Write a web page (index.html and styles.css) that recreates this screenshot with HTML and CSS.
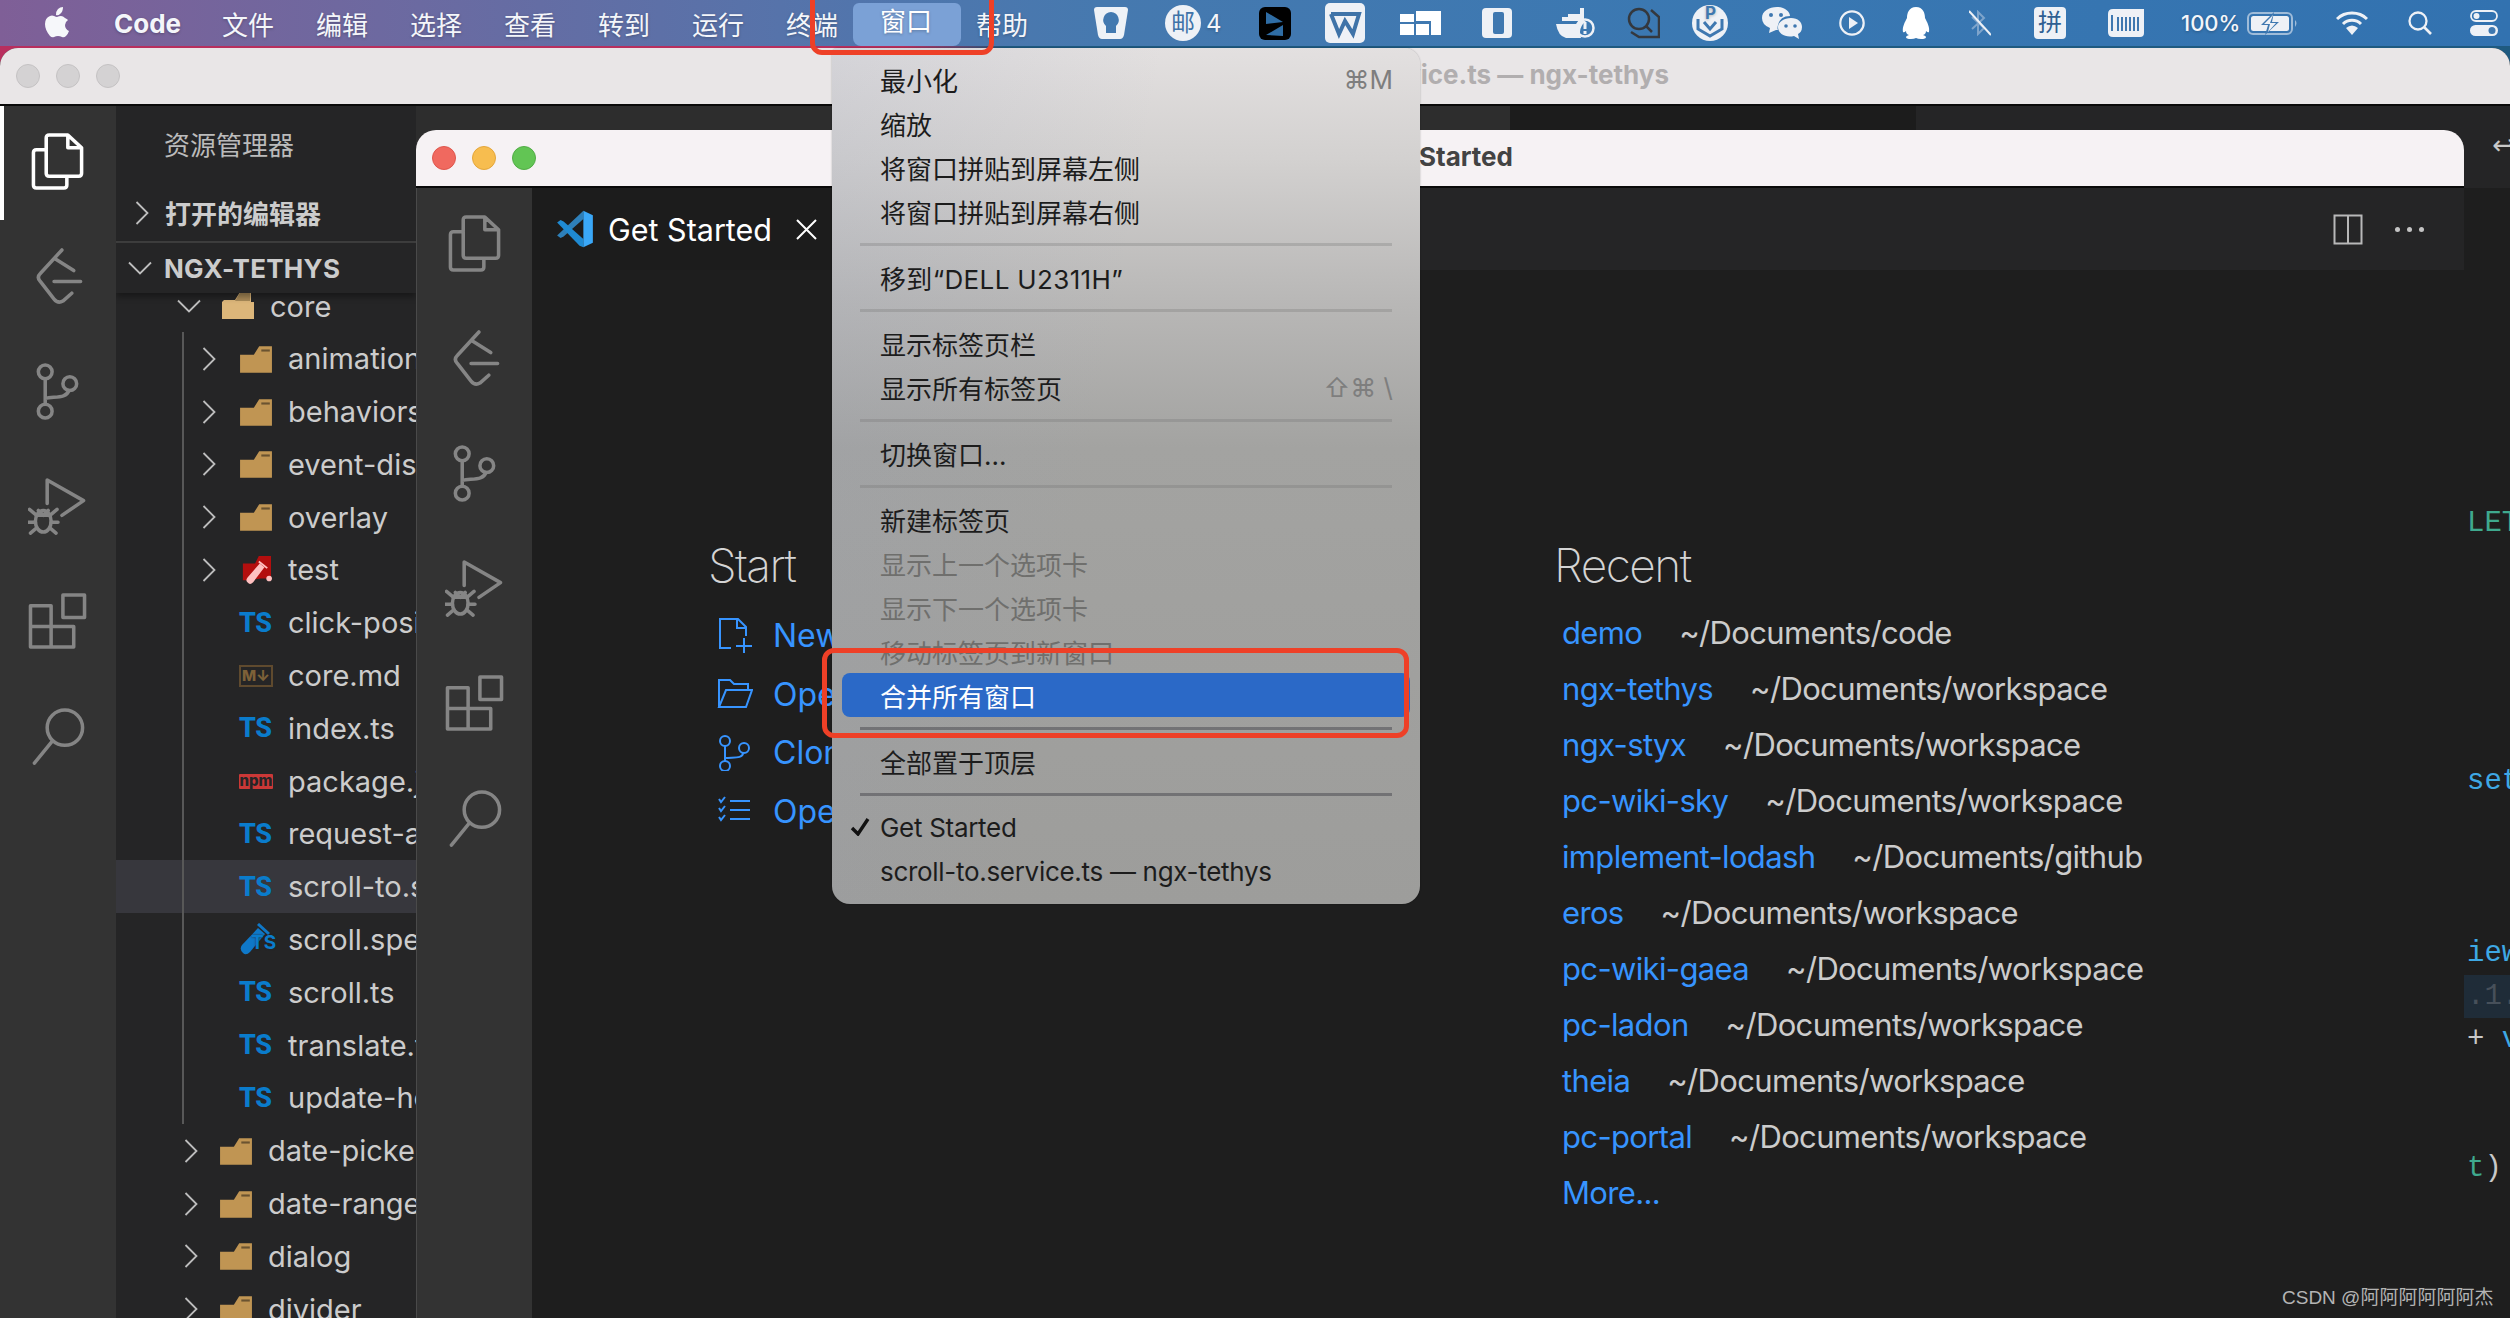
FILE: index.html
```html
<!DOCTYPE html>
<html lang="zh-CN">
<head>
<meta charset="utf-8">
<title>VS Code 窗口菜单</title>
<link rel="stylesheet" href="styles.css">
</head>
<body>
<svg class="defs" width="0" height="0" aria-hidden="true">
  <symbol id="i-files" viewBox="0 0 60 58"><path d="M21 2H40L54 15V41Q54 44 51 44H21Q18 44 18 41V5Q18 2 21 2ZM40 3V15H53M18 17H8Q5 17 5 20V53Q5 56 8 56H36Q39 56 39 53V44"/></symbol>
  <symbol id="i-leet" viewBox="0 0 60 58"><path d="M34 2L12 26Q8 30 12 34L26 52Q30 57 35 54L44 46M27 11L46 23M26 34H53"/></symbol>
  <symbol id="i-git" viewBox="0 0 60 58"><circle cx="17" cy="9" r="7"/><circle cx="17" cy="49" r="7"/><circle cx="42" cy="21" r="7"/><path d="M17 16V42M17 36C27 34 39 36 41 28"/></symbol>
  <symbol id="i-debug" viewBox="0 0 60 58"><path d="M19 26V2L56 23L34 38"/><ellipse cx="15" cy="44" rx="8" ry="11"/><path d="M8 38H22M1 32L7 37M29 32L23 37M0 45H7M30 45H23M2 56L8 51M28 56L22 51M10 33L15 38L20 33"/></symbol>
  <symbol id="i-ext" viewBox="0 0 60 58"><path d="M2 13H23V55H2ZM2 34H46V55H23M35 2H57V25H35Z"/></symbol>
  <symbol id="i-search" viewBox="0 0 60 58"><circle cx="37" cy="20" r="18"/><path d="M24 34L6 56"/></symbol>
  <symbol id="i-chev" viewBox="0 0 14 24"><path d="M1.5 1L12.500 12L1.500 23"/></symbol>
  <symbol id="i-folder" viewBox="0 0 32 28"><path class="fbody" d="M1 27V10H14L19 2H31V27Z"/><path class="fslot" d="M21 5H29V7H21Z"/></symbol>
</svg>

<div class="desktop">
  <section class="win win-back">
    <header class="titlebar titlebar-back">
      <div class="lights"><i class="dot dot-off"></i><i class="dot dot-off"></i><i class="dot dot-off"></i></div>
      <div class="title title-back">scroll-to.service.ts — ngx-tethys</div>
    </header>
    <div class="win-body">
      <nav class="activity activity-back">
        <svg class="act act-on"><use href="#i-files"/></svg>
        <svg class="act"><use href="#i-leet"/></svg>
        <svg class="act"><use href="#i-git"/></svg>
        <svg class="act"><use href="#i-debug"/></svg>
        <svg class="act"><use href="#i-ext"/></svg>
        <svg class="act"><use href="#i-search"/></svg>
      </nav>
      <aside class="sidebar">
        <div class="side-title">资源管理器</div>
        <div class="side-sec side-sec-open"><svg class="chev"><use href="#i-chev"/></svg><b>打开的编辑器</b></div>
        <div class="side-sec side-sec-proj"><svg class="chev chev-down"><use href="#i-chev"/></svg><b>NGX-TETHYS</b></div>
        <div class="tree">
          <div class="row d0 row-core"><svg class="chev chev-down"><use href="#i-chev"/></svg>
            <svg class="ico" viewBox="0 0 34 28"><path fill="#dcb67a" d="M1 27V10L3 8H14L19 0H30V10H33V27Z"/><path fill="#a98a58" d="M2 9H14L19 1H29V9H15Z"/></svg>
            <span>core</span></div>
          <div class="nested">
            <div class="row d1"><svg class="chev"><use href="#i-chev"/></svg><svg class="ico fo"><use href="#i-folder"/></svg><span>animations</span></div>
            <div class="row d1"><svg class="chev"><use href="#i-chev"/></svg><svg class="ico fo"><use href="#i-folder"/></svg><span>behaviors</span></div>
            <div class="row d1"><svg class="chev"><use href="#i-chev"/></svg><svg class="ico fo"><use href="#i-folder"/></svg><span>event-dispatcher</span></div>
            <div class="row d1"><svg class="chev"><use href="#i-chev"/></svg><svg class="ico fo"><use href="#i-folder"/></svg><span>overlay</span></div>
            <div class="row d1"><svg class="chev"><use href="#i-chev"/></svg>
              <svg class="ico" viewBox="0 0 34 32"><path fill="#b30e0e" d="M3 27V9H16L20 1H33V25H22L10 27Z"/><path fill="#ffc0c0" d="M9 30Q5 28 8 24L21 9L26 13L14 29Q11 32 9 30Z"/><path stroke="#ffc0c0" stroke-width="2" d="M20 7L29 14"/><circle cx="31" cy="25" r="3" fill="#ffc0c0"/></svg>
              <span>test</span></div>
            <div class="row d1 file"><i class="ico ts">TS</i><span>click-position.ts</span></div>
            <div class="row d1 file"><i class="ico md">M↓</i><span>core.md</span></div>
            <div class="row d1 file"><i class="ico ts">TS</i><span>index.ts</span></div>
            <div class="row d1 file"><i class="ico npm">npm</i><span>package.json</span></div>
            <div class="row d1 file"><i class="ico ts">TS</i><span>request-animation.ts</span></div>
            <div class="row d1 file row-sel"><i class="ico ts">TS</i><span>scroll-to.service.ts</span></div>
            <div class="row d1 file"><i class="ico spec"><svg viewBox="0 0 34 34"><path fill="#0f78c8" d="M4 30Q0 26 3 22L19 5L26 11L11 29Q7 33 4 30Z"/><path stroke="#0f78c8" stroke-width="3" d="M19 1L30 11"/></svg><em>TS</em></i><span>scroll.spec.ts</span></div>
            <div class="row d1 file"><i class="ico ts">TS</i><span>scroll.ts</span></div>
            <div class="row d1 file"><i class="ico ts">TS</i><span>translate.ts</span></div>
            <div class="row d1 file"><i class="ico ts">TS</i><span>update-host.ts</span></div>
          </div>
          <div class="row d0"><svg class="chev"><use href="#i-chev"/></svg><svg class="ico fo"><use href="#i-folder"/></svg><span>date-picker</span></div>
          <div class="row d0"><svg class="chev"><use href="#i-chev"/></svg><svg class="ico fo"><use href="#i-folder"/></svg><span>date-range-picker</span></div>
          <div class="row d0"><svg class="chev"><use href="#i-chev"/></svg><svg class="ico fo"><use href="#i-folder"/></svg><span>dialog</span></div>
          <div class="row d0"><svg class="chev"><use href="#i-chev"/></svg><svg class="ico fo"><use href="#i-folder"/></svg><span>divider</span></div>
        </div>
      </aside>
      <div class="back-editor">
        <div class="back-tabs">
          <div class="bt bt-a"></div><div class="bt bt-b"></div>
          <div class="bt bt-c"><span class="back-arrow">↩</span></div>
        </div>
        <div class="code">
          <div class="ln teal">LET</div>
          <div class="ln"></div><div class="ln"></div><div class="ln"></div><div class="ln"></div><div class="ln"></div>
          <div class="ln sky">set</div>
          <div class="ln"></div><div class="ln"></div><div class="ln"></div>
          <div class="ln sky">iew</div>
          <div class="ln ln-hl">.1.</div>
          <div class="ln"><span class="plain">+ </span><span class="sky">v</span></div>
          <div class="ln"></div><div class="ln"></div>
          <div class="ln"><span class="teal">t</span><span class="plain">)</span></div>
        </div>
      </div>
    </div>
  </section>

  <section class="win win-front">
    <header class="titlebar titlebar-front">
      <div class="lights"><i class="dot dot-r"></i><i class="dot dot-y"></i><i class="dot dot-g"></i></div>
      <div class="title title-front">Get Started</div>
    </header>
    <div class="win-body">
      <nav class="activity activity-front">
        <svg class="act"><use href="#i-files"/></svg>
        <svg class="act"><use href="#i-leet"/></svg>
        <svg class="act"><use href="#i-git"/></svg>
        <svg class="act"><use href="#i-debug"/></svg>
        <svg class="act"><use href="#i-ext"/></svg>
        <svg class="act"><use href="#i-search"/></svg>
      </nav>
      <main class="editor">
        <div class="tabbar">
          <div class="tab">
            <svg class="vsc" viewBox="0 0 100 100"><path fill="#2e80ba" d="M72 2V24L20 70L12 74L3 67Z"/><path fill="#1f8ad2" d="M3 33L12 26L20 30L72 76V98L62 94Z"/><path fill="#3aa8f8" d="M72 2L97 14V86L72 98Z"/></svg>
            <span class="tab-name">Get Started</span>
            <svg class="tab-x" viewBox="0 0 21 21"><path d="M1 1L20 20M20 1L1 20"/></svg>
          </div>
          <div class="tab-actions">
            <svg class="split" viewBox="0 0 30 31"><path d="M1.500 1.500H28.500V29.500H1.500ZM15 1.500V29.500"/></svg>
            <div class="dots"><i></i><i></i><i></i></div>
          </div>
        </div>
        <div class="welcome">
          <div class="col-start">
            <h2 class="wl-h">Start</h2>
            <ul class="start-list">
              <li><svg class="st-ic" viewBox="0 0 36 36"><path d="M14 31H3V2H21L29 10V19M20 2V11H29M19 29H35M27 21V36"/></svg><a>New File...</a></li>
              <li><svg class="st-ic" viewBox="0 0 36 36"><path d="M2 31V4H13L17 8H31V14M2 31H29L35 14H9L2 31Z"/></svg><a>Open...</a></li>
              <li><svg class="st-ic" viewBox="0 0 36 36"><circle cx="8" cy="6" r="5"/><circle cx="8" cy="31" r="5"/><circle cx="27" cy="13" r="5"/><path d="M8 11V26M8 23C16 22 26 24 26 18"/></svg><a>Clone Repository...</a></li>
              <li><svg class="st-ic" viewBox="0 0 36 36"><path d="M13 7H33M13 16H33M13 25H33M2 5L4 8L8 3M2 14L4 17L8 12M2 23L4 26L8 21"/></svg><a>Open Folder...</a></li>
            </ul>
          </div>
          <div class="col-recent">
            <h2 class="wl-h">Recent</h2>
            <ul class="recent-list">
              <li><a>demo</a><span>~/Documents/code</span></li>
              <li><a>ngx-tethys</a><span>~/Documents/workspace</span></li>
              <li><a>ngx-styx</a><span>~/Documents/workspace</span></li>
              <li><a>pc-wiki-sky</a><span>~/Documents/workspace</span></li>
              <li><a>implement-lodash</a><span>~/Documents/github</span></li>
              <li><a>eros</a><span>~/Documents/workspace</span></li>
              <li><a>pc-wiki-gaea</a><span>~/Documents/workspace</span></li>
              <li><a>pc-ladon</a><span>~/Documents/workspace</span></li>
              <li><a>theia</a><span>~/Documents/workspace</span></li>
              <li><a>pc-portal</a><span>~/Documents/workspace</span></li>
              <li><a>More...</a></li>
            </ul>
          </div>
        </div>
      </main>
    </div>
  </section>

  <header class="menubar">
    <svg class="apple" viewBox="0 0 26 32"><path d="M19 1Q19 6 16 8Q14 10 12 9Q12 5 14 3Q16 1 19 1ZM21 12Q23 13 24 14Q21 16 21 19Q21 23 25 25Q24 28 22 30Q20 32 18 31Q16 30 14 30Q12 30 10 31Q8 32 6 30Q1 24 1 18Q1 12 6 10Q8 9 10 10Q12 11 13 11Q15 10 17 10Q19 10 21 12Z"/></svg>
    <b class="mi-app">Code</b>
    <span class="mi">文件</span><span class="mi">编辑</span><span class="mi">选择</span><span class="mi">查看</span><span class="mi">转到</span><span class="mi">运行</span><span class="mi">终端</span><span class="mi mi-on">窗口</span><span class="mi">帮助</span>
    <div class="status">
      <svg class="s s-key" viewBox="0 0 34 32"><path fill="#eef2f7" d="M3 0H31Q34 0 34 3L30 28Q29 32 26 32H8Q5 32 4 28L0 3Q0 0 3 0Z"/><path fill="#4279b0" d="M17 5A8 8 0 0 1 22 19V26H12V19A8 8 0 0 1 17 5Z"/></svg>
      <span class="s-mail">邮</span><span class="s-count">4</span>
      <svg class="s s-dark" viewBox="0 0 32 33"><rect width="32" height="33" rx="6" fill="#000"/><path fill="#2f6da5" d="M7 5L24 15L7 17ZM7 28L24 18V29Z"/></svg>
      <svg class="s s-w" viewBox="0 0 40 40"><rect width="40" height="40" rx="5" fill="#eef1f6"/><path fill="none" stroke="#3f73a8" stroke-width="4" d="M6 11H34L28 31L20 18L14 31L6 11"/></svg>
      <svg class="s s-grid" viewBox="0 0 41 24"><path fill="#fff" d="M0 3H14V11H0ZM16 0H41V24H31V10H16ZM0 13H14V24H0ZM16 13H29V24H16Z"/></svg>
      <svg class="s s-sq" viewBox="0 0 30 30"><rect width="30" height="30" rx="4" fill="#eef1f6"/><rect x="11" y="4" width="11" height="22" rx="2" fill="#3f78b0"/></svg>
      <svg class="s s-docker" viewBox="0 0 39 31"><path fill="#eef1f6" d="M0 16H22V13H6V9H12V6H24V0H28V13H30Q24 18 24 24Q24 27 25 30H10Q2 28 0 16Z"/><circle cx="29" cy="20" r="8.500" fill="none" stroke="#eef1f6" stroke-width="2.500"/><path stroke="#eef1f6" stroke-width="3" d="M29 14V21M29 23V26"/></svg>
      <svg class="s s-mag" viewBox="0 0 33 32"><g fill="none" stroke="#34383e" stroke-width="2.500"><circle cx="12" cy="12" r="10"/><path d="M19 19L25 25M24 3L32 10V30H12L4 25"/></g></svg>
      <svg class="s s-p" viewBox="0 0 36 36"><circle cx="18" cy="18" r="18" fill="#eef1f6"/><path fill="none" stroke="#3f78b0" stroke-width="3" d="M6 14V24L18 31L30 24V14M12 17L18 24L24 17"/><text class="pl" x="13" y="14">P</text></svg>
      <svg class="s s-chat" viewBox="0 0 40 32"><path fill="#eef1f6" d="M15 0C23 0 28 5 28 9Q18 9 16 18Q15 22 16 23H14L7 26L8 21Q0 18 0 11C0 4 7 0 15 0Z"/><path fill="#eef1f6" d="M29 11C36 11 40 15 40 20C40 24 38 26 36 27L37 32L32 29C24 31 16 27 16 20C16 15 22 11 29 11Z"/><g fill="#3f78b0"><circle cx="9" cy="8" r="2"/><circle cx="19" cy="8" r="2"/><circle cx="24" cy="19" r="1.800"/><circle cx="33" cy="19" r="1.800"/></g></svg>
      <svg class="s s-play" viewBox="0 0 26 26"><circle cx="13" cy="13" r="11.700" fill="none" stroke="#eef1f6" stroke-width="2.200"/><path fill="#eef1f6" d="M10 7L19 13L10 19Z"/></svg>
      <svg class="s s-qq" viewBox="0 0 28 32"><path fill="#fff" d="M14 0C21 0 23 6 23 11C25 15 28 20 27 25Q26 26 24 24Q24 27 21 28Q24 29 24 30Q24 32 19 32Q16 32 14 31Q12 32 9 32Q4 32 4 30Q4 29 7 28Q4 27 4 24Q2 26 1 25C0 20 3 15 5 11C5 6 7 0 14 0Z"/></svg>
      <svg class="s s-bt" viewBox="0 0 22 26"><path fill="none" stroke="#7ea4cb" stroke-width="2" d="M3 7L15 18L9 24V2L15 8L3 19"/><path stroke="#eef1f6" stroke-width="2" d="M0 1L22 25"/></svg>
      <span class="s-pin">拼</span>
      <svg class="s s-bar" viewBox="0 0 36 28"><path fill="#eef1f6" d="M5 0H36V24Q36 28 32 28H5Q0 28 0 23V5Q0 0 5 0Z"/><path stroke="#3f78b0" stroke-width="2" d="M4 6V22M10 8V22M14 8V22M18 8V22M22 8V22M26 8V22M30 8V22"/></svg>
      <span class="s-pct">100%</span>
      <svg class="s s-bat" viewBox="0 0 51 23"><rect x="1" y="1" width="44" height="21" rx="5" fill="none" stroke="#9fbcd9" stroke-width="2"/><rect x="4" y="4" width="38" height="15" rx="2.500" fill="#eef1f6"/><path fill="#3f78b0" d="M27 0L14 13H21L18 23L32 10H25Z"/><path fill="#eef1f6" d="M26 3L17 12H23L21 20L29 11H23Z"/><path fill="#9fbcd9" d="M48 8Q51 11 48 15Z"/></svg>
      <svg class="s s-wifi" viewBox="0 0 32 24"><g fill="none" stroke="#eef1f6" stroke-width="3"><path d="M1 8C9 0 23 0 31 8"/><path d="M7 13C12 8 20 8 25 13"/></g><path fill="#eef1f6" d="M10 17Q16 12 22 17L16 24Z"/></svg>
      <svg class="s s-find" viewBox="0 0 24 24"><circle cx="10" cy="10" r="8.500" fill="none" stroke="#eef1f6" stroke-width="2.300"/><path stroke="#eef1f6" stroke-width="2.600" d="M16 16L23 23"/></svg>
      <svg class="s s-ctl" viewBox="0 0 28 26"><rect x="1" y="1" width="26" height="10" rx="5" fill="none" stroke="#eef1f6" stroke-width="1.800"/><circle cx="6.500" cy="6" r="3" fill="#eef1f6"/><rect y="15" width="28" height="11" rx="5.500" fill="#eef1f6"/><circle cx="22" cy="20.500" r="3.500" fill="#3f78b0"/></svg>
    </div>
  </header>

  <div class="menu">
    <div class="m"><i class="chk"></i><span>最小化</span><kbd>⌘M</kbd></div>
    <div class="m"><i class="chk"></i><span>缩放</span></div>
    <div class="m"><i class="chk"></i><span>将窗口拼贴到屏幕左侧</span></div>
    <div class="m"><i class="chk"></i><span>将窗口拼贴到屏幕右侧</span></div>
    <div class="sep"></div>
    <div class="m m-dell"><i class="chk"></i><span>移到“DELL U2311H”</span></div>
    <div class="sep"></div>
    <div class="m"><i class="chk"></i><span>显示标签页栏</span></div>
    <div class="m"><i class="chk"></i><span>显示所有标签页</span><kbd>⇧⌘ \</kbd></div>
    <div class="sep"></div>
    <div class="m"><i class="chk"></i><span>切换窗口...</span></div>
    <div class="sep"></div>
    <div class="m"><i class="chk"></i><span>新建标签页</span></div>
    <div class="m m-off"><i class="chk"></i><span>显示上一个选项卡</span></div>
    <div class="m m-off"><i class="chk"></i><span>显示下一个选项卡</span></div>
    <div class="m m-off"><i class="chk"></i><span>移动标签页到新窗口</span></div>
    <div class="m m-hl"><i class="chk"></i><span>合并所有窗口</span></div>
    <div class="sep sep-dark"></div>
    <div class="m"><i class="chk"></i><span>全部置于顶层</span></div>
    <div class="sep sep-dark"></div>
    <div class="m m-latin"><i class="chk"><svg class="tick" viewBox="0 0 20 18"><path d="M2 10L8 16L18 1"/></svg></i><span>Get Started</span></div>
    <div class="m m-latin"><i class="chk"></i><span>scroll-to.service.ts — ngx-tethys</span></div>
  </div>

  <div class="mark mark-bar"></div>
  <div class="mark mark-item"></div>
  <div class="watermark">CSDN @阿阿阿阿阿阿杰</div>
</div>
</body>
</html>
```

FILE: styles.css
```css
* { box-sizing: border-box; }
html, body { margin: 0; padding: 0; }
body { width: 2510px; height: 1318px; overflow: hidden; font-family: Inter, "Noto Sans CJK SC", sans-serif; }
.defs { position: absolute; }
i, em { font-style: normal; }
ul { list-style: none; margin: 0; padding: 0; }
h2 { margin: 0; }

.desktop { position: relative; width: 2510px; height: 1318px; overflow: hidden; background: linear-gradient(90deg, #b82f5e 0, #b82f5e 36%, #1f5a80 40%, #1f5a80 100%); }

/* menu bar */
.menubar { position: absolute; left: 0; top: 0; width: 2510px; height: 46px; display: flex; align-items: center; padding-left: 44px; color: #f4f6fa; font-size: 26px; background: linear-gradient(90deg, #7f5f97 0, #6b6aa1 420px, #4f76ad 900px, #4679af 1100px, #3a78b2 1700px, #3272b0 2510px); text-shadow: 0 1px 3px rgba(0,0,0,.25); }
.apple { width: 26px; height: 32px; fill: #f6f7fa; margin-top: -3px; }
.mi-app { margin-left: 44px; margin-right: 41px; font-weight: 700; font-size: 26px; width: 67px; }
.mi { width: 52px; margin-right: 42px; white-space: nowrap; font-size: 26px; position: relative; }
.mi-on { background: #7ba1d6; margin: 3px 15px 0 -27px; padding: 2px 27px 0; width: 108px; height: 43px; border-radius: 6px 6px 8px 8px; line-height: 34px; color: #fff; }
.status { margin-left: auto; padding-right: 12px; display: flex; align-items: center; }
.s { display: block; flex: none; }
.s-key { width: 34px; height: 32px; }
.s-mail { width: 36px; height: 36px; margin-left: 37px; border-radius: 50%; background: #eef1f6; color: #3f73a8; font-size: 24px; line-height: 36px; text-align: center; text-shadow: none; }
.s-count { width: 15px; margin-left: 5px; margin-right: 38px; font-size: 24px; }
.s-dark { width: 32px; height: 33px; }
.s-w { width: 40px; height: 40px; margin-left: 34px; }
.s-grid { width: 41px; height: 24px; margin-left: 35px; }
.s-sq { width: 30px; height: 30px; margin-left: 41px; }
.s-docker { width: 39px; height: 31px; margin-left: 44px; }
.s-mag { width: 33px; height: 32px; margin-left: 32px; }
.s-p { width: 36px; height: 36px; margin-left: 32px; }
.pl { font: 700 17px Inter, sans-serif; fill: #3f78b0; }
.s-chat { width: 40px; height: 32px; margin-left: 34px; }
.s-play { width: 26px; height: 26px; margin-left: 37px; }
.s-qq { width: 28px; height: 32px; margin-left: 37px; }
.s-bt { width: 22px; height: 26px; margin-left: 39px; }
.s-pin { width: 32px; height: 32px; margin-left: 43px; background: #eef1f6; border-radius: 4px; color: #2f5f92; font-size: 24px; line-height: 32px; text-align: center; text-shadow: none; }
.s-bar { width: 36px; height: 28px; margin-left: 42px; }
.s-pct { width: 57px; margin-left: 37px; font-size: 22px; white-space: nowrap; font-weight: 500; }
.s-bat { width: 51px; height: 23px; margin-left: 9px; }
.s-wifi { width: 32px; height: 24px; margin-left: 38px; }
.s-find { width: 24px; height: 24px; margin-left: 40px; }
.s-ctl { width: 28px; height: 26px; margin-left: 38px; }

/* windows */
.win { position: absolute; display: flex; flex-direction: column; overflow: hidden; }
.win-back { left: 0; top: 48px; width: 2510px; height: 1270px; border-radius: 18px 18px 0 0; background: #1e1e1e; }
.win-front { left: 416px; top: 130px; width: 2048px; height: 1188px; border-radius: 20px 20px 0 0; background: #1e1e1e; }
.titlebar { flex: none; height: 58px; border-bottom: 2px solid #0a0a0a; display: flex; align-items: center; position: relative; }
.titlebar-back { background: #e9e6e7; }
.titlebar-front { background: #f6f2f4; }
.lights { display: flex; gap: 16px; padding-left: 16px; }
.dot { display: block; width: 24px; height: 24px; border-radius: 50%; }
.dot-off { background: #d4d2d3; border: 1px solid #c4c2c3; }
.dot-r { background: #f0695f; border: 1px solid #de574d; }
.dot-y { background: #f7bd4f; border: 1px solid #e3a63b; }
.dot-g { background: #62c554; border: 1px solid #52ad46; }
.title { position: absolute; white-space: nowrap; font-size: 26px; font-weight: 700; top: 11px; }
.title-back { right: 841px; color: #b1aeaf; }
.title-front { right: 951px; color: #434343; }
.win-body { flex: 1; display: flex; min-height: 0; }

/* activity bar */
.activity { flex: none; display: flex; flex-direction: column; align-items: center; gap: 58px; padding-top: 27px; background: #333; color: #858585; }
.activity-back { width: 116px; position: relative; }
.activity-back::before { content: ""; position: absolute; left: 0; top: 0; width: 4px; height: 114px; background: #fff; }
.activity-front { width: 116px; border-left: 1px solid #4a4a4a; }
.act { width: 60px; height: 57px; flex: none; fill: none; stroke: currentColor; stroke-width: 3.600; stroke-linecap: round; stroke-linejoin: round; }
.act-on { color: #fff; }

/* sidebar */
.sidebar { flex: none; width: 300px; background: #252526; color: #ccc; font-size: 29px; display: flex; flex-direction: column; overflow: hidden; }
.sidebar > * { flex: none; }
.side-title { height: 80px; line-height: 80px; padding-left: 48px; font-size: 26px; color: #bbb; }
.side-sec { display: flex; align-items: center; font-size: 26px; color: #ccc; position: relative; background: #252526; z-index: 2; padding-left: 19px; white-space: nowrap; }
.side-sec b { margin-left: 16px; font-weight: 700; }
.side-sec .chev { flex: none; }
.side-sec-open { height: 57px; border-bottom: 2px solid #3e3e3e; padding-bottom: 2px; }
.side-sec-proj { height: 50px; box-shadow: 0 4px 6px rgba(0,0,0,.35); padding-left: 17px; }
.side-sec-proj b { margin-left: 17px; letter-spacing: .3px; }
.tree { margin-top: -13.400px; }
.row { display: flex; align-items: center; height: 52.800px; padding-left: 86px; white-space: nowrap; }
.chev { width: 14px; height: 24px; flex: none; fill: none; stroke: #bdbdbd; stroke-width: 1.800; }
.chev-down { transform: rotate(90deg); }
.ico { display: block; width: 34px; height: 30px; flex: none; margin: 0 15px 0 23px; }
.fbody { fill: #c09553; }
.fslot { fill: #6a5330; }
.d0 { padding-left: 68px; }
.d0 .ico { margin-left: 21px; margin-right: 15px; }
.d0.row-core { padding-left: 66px; }
.d0.row-core .ico { margin: 0 15px 0 25px; }
.d1.file { padding-left: 123px; }
.d1.file .ico { margin-left: 0; }
.nested { position: relative; }
.nested::before { content: ""; position: absolute; left: 66px; top: 0; bottom: 0; width: 2px; background: #585858; z-index: 1; }
.row-sel { background: #37373d; }
.ts { color: #0a7ccc; font-weight: 800; font-size: 27px; line-height: 30px; letter-spacing: -.5px; font-family: Roboto, sans-serif; }
.md { height: 22px; border: 2px solid #5f4a2e; color: #7d6138; font-weight: 800; font-size: 15px; line-height: 18px; text-align: center; }
.npm { height: 15px; background: #cb3837; color: #252526; font-weight: 800; font-size: 15px; line-height: 14px; text-align: center; border-radius: 1px; }
.spec { position: relative; }
.spec svg { position: absolute; left: 0; top: -2px; width: 34px; height: 34px; }
.spec em { position: absolute; left: 12px; top: 6px; font-size: 19px; font-weight: 700; color: #0a7ccc; text-shadow: 0 0 2px #252526; line-height: 24px; }

/* back editor */
.back-editor { flex: 1; min-width: 0; display: flex; flex-direction: column; }
.back-tabs { flex: none; height: 82px; display: flex; }
.bt { height: 82px; }
.bt-a { width: 1094px; background: #2d2d2d; }
.bt-b { width: 406px; background: #1c1c1c; }
.bt-c { flex: 1; background: #252526; display: flex; justify-content: flex-end; align-items: center; overflow: hidden; }
.back-arrow { color: #c8c8c8; font-size: 26px; margin: -4px -4px 0 0; font-family: "DejaVu Sans", sans-serif; }
.code { margin-left: auto; width: 47px; padding-top: 314px; border-left: 1px solid #3c3c3c; overflow: hidden; font: 29px/43px "Liberation Mono", monospace; white-space: nowrap; flex: 1; }
.ln { height: 43px; padding-left: 3px; }
.ln-hl { background: #1f2c38; color: #47505a; }
.teal { color: #3fa98e; }
.sky { color: #3ea8e4; }
.plain { color: #c8c8c8; }

/* editor */
.editor { flex: 1; min-width: 0; display: flex; flex-direction: column; background: #1e1e1e; }
.tabbar { flex: none; height: 82px; display: flex; align-items: center; justify-content: space-between; background: #252526; }
.tab { width: 310px; height: 82px; display: flex; align-items: center; background: #1c1c1c; padding-left: 24px; }
.vsc { width: 38px; height: 38px; flex: none; }
.tab-name { margin-left: 14px; color: #fff; font-size: 30.500px; white-space: nowrap; }
.tab-x { width: 21px; height: 21px; flex: none; margin-left: 24px; fill: none; stroke: #fff; stroke-width: 2; }
.tab-actions { display: flex; align-items: center; padding-right: 40px; }
.split { width: 30px; height: 31px; fill: none; stroke: #b8b8b8; stroke-width: 2; }
.dots { display: flex; gap: 7px; margin-left: 32px; }
.dots i { display: block; width: 5px; height: 5px; border-radius: 50%; background: #c4c4c4; }

.welcome { flex: 1; display: flex; padding: 265px 0 0 179px; }
.col-start { flex: none; width: 846px; }
.wl-h { font-size: 46px; line-height: 60px; font-weight: 200; color: #d4d4d4; letter-spacing: -1.500px; margin-left: -3px; }
.start-list { margin-top: 11px; }
.start-list li { height: 58.800px; display: flex; align-items: center; padding-left: 6px; white-space: nowrap; }
.st-ic { width: 36px; height: 36px; flex: none; fill: none; stroke: #3794ff; stroke-width: 2; margin-right: 20px; }
.start-list a, .recent-list a { color: #3794ff; }
.start-list a { font-size: 32px; }
.recent-list { margin-top: 9px; margin-left: 5px; }
.recent-list li { height: 56px; display: flex; align-items: center; font-size: 31px; letter-spacing: -.650px; white-space: nowrap; }
.recent-list span { margin-left: 37px; color: #cccccc; }

/* window menu */
.menu { position: absolute; left: 832px; top: 48px; width: 588px; height: 856px; padding-top: 9px; border-radius: 6px 16px 18px 18px; background: linear-gradient(100deg, rgba(150,160,185,.18) 0, rgba(150,160,185,0) 45%), linear-gradient(180deg, #e3e0e0 0, #d3d1d0 110px, #b9b8b7 250px, #a3a3a1 400px, #9d9d9b 856px); color: #1c1c1c; font-size: 26px; box-shadow: 0 0 2px rgba(0,0,0,.3); }
.m { height: 44px; margin: 0 10px; padding: 0 17px 0 8px; display: flex; align-items: center; border-radius: 8px; white-space: nowrap; }
.chk { flex: none; width: 30px; height: 18px; display: block; }
.tick { display: block; width: 20px; height: 18px; fill: none; stroke: #111; stroke-width: 3.400; }
.m kbd { margin-left: auto; font: inherit; color: #7e7e7e; }
.m-off { color: #6f6f6d; }
.m-hl { background: #2b69c7; color: #fff; }
.m-latin span { letter-spacing: -.3px; }
.m-dell span { letter-spacing: .35px; }
.sep { height: 22px; display: flex; align-items: center; margin: 0 28px; }
.sep::before { content: ""; flex: 1; height: 3px; background: rgba(110,110,110,.28); }
.sep-dark::before { background: rgba(85,85,90,.6); }

/* annotations */
.mark { position: absolute; border: 5px solid #ee4027; border-radius: 12px; }
.mark-bar { left: 810px; top: -12px; width: 184px; height: 67px; }
.mark-item { left: 822px; top: 648px; width: 587px; height: 90px; }
.watermark { position: absolute; left: 2282px; top: 1287px; font: 19px/22px "Liberation Sans", "Noto Sans CJK SC", sans-serif; color: #b4b4b4; white-space: nowrap; }
```
